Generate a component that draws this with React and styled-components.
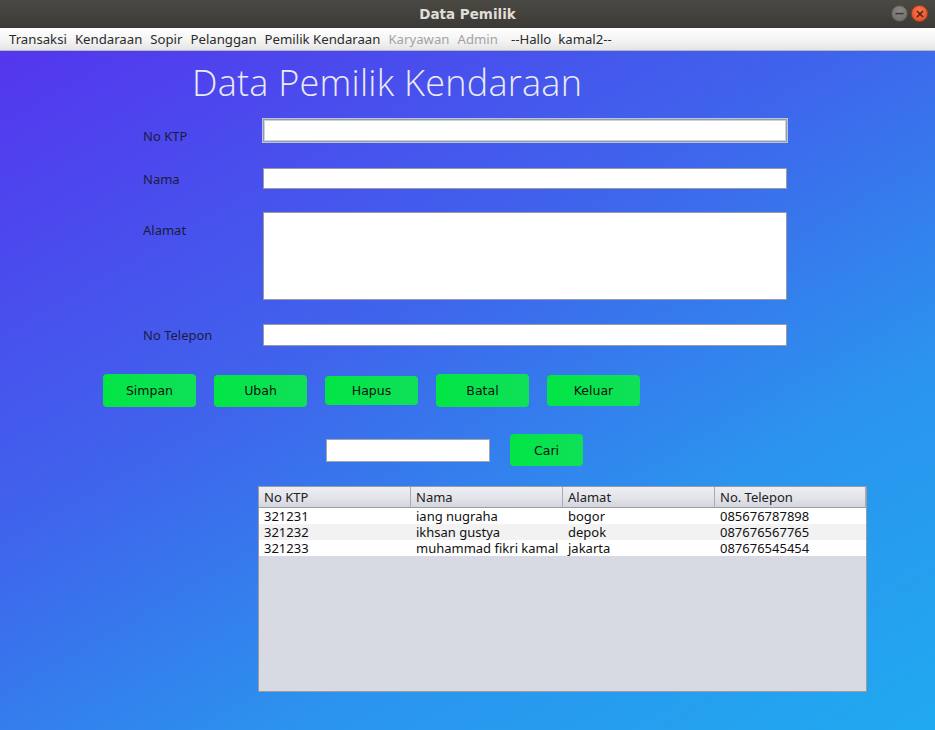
import React from "react";
import styled, { createGlobalStyle } from "styled-components";

const Global = createGlobalStyle`
  html, body { margin: 0; padding: 0; }
  body { width: 935px; height: 730px; overflow: hidden; font-family: "Noto Sans", "DejaVu Sans", sans-serif; }
  * { box-sizing: border-box; }
`;

const Window = styled.div`
  width: 935px;
  height: 730px;
  display: flex;
  flex-direction: column;
`;

const TitleBar = styled.div`
  height: 28px;
  flex: 0 0 28px;
  background: linear-gradient(#4a4944, #3b3a36);
  display: flex;
  align-items: center;
  justify-content: center;
  position: relative;
  color: #e0ddd6;
  font-family: "DejaVu Sans", sans-serif;
  font-weight: bold;
  font-size: 13.5px;
`;

const WinButtons = styled.div`
  position: absolute;
  right: 7px;
  top: 5px;
  display: flex;
  gap: 3px;
`;

const WinBtn = styled.div`
  width: 17px;
  height: 17px;
  border-radius: 50%;
  display: flex;
  align-items: center;
  justify-content: center;
  background: ${(p) =>
    p.$close
      ? "radial-gradient(circle at 50% 35%, #f47a55, #e0491f)"
      : "radial-gradient(circle at 50% 35%, #8a8984, #6a6965)"};
  border: 1px solid ${(p) => (p.$close ? "#b53a18" : "#4e4d49")};
`;

const MenuBar = styled.div`
  height: 23px;
  flex: 0 0 23px;
  background: linear-gradient(#ffffff, #f3f3f3 60%, #e4e4e4);
  border-bottom: 1px solid #b8b8b8;
  display: flex;
  align-items: center;
  padding-left: 9px;
  gap: 8px;
  font-size: 13.2px;
`;

const MenuItem = styled.span`
  color: ${(p) => (p.$disabled ? "#a3a3a3" : "#2b2b2b")};
  margin-left: ${(p) => p.$extra || 0}px;
`;

const Content = styled.div`
  flex: 1;
  background: linear-gradient(150deg, #5436ee 0%, #3f64ec 40%, #2b94ee 70%, #20a9f0 100%);
  display: flex;
  flex-direction: column;
  padding-top: 11px;
`;

const Title = styled.h1`
  margin: 0 0 0 192px;
  font-family: "Open Sans", sans-serif;
  font-weight: 300;
  font-size: 36px;
  letter-spacing: 0.25px;
  line-height: 42px;
  color: #ecebf3;
`;

const Form = styled.div`
  display: flex;
  flex-direction: column;
  margin-left: 143px;
`;

const Row = styled.div`
  display: flex;
  align-items: flex-start;
  height: ${(p) => p.$h}px;
  margin-top: ${(p) => p.$mt}px;
`;

const Label = styled.label`
  width: 120px;
  flex: 0 0 120px;
  font-size: 13px;
  line-height: 18px;
  color: #1d1b3d;
  padding-top: ${(p) => p.$pt || 0}px;
`;

const Field = styled.div`
  width: 524px;
  height: 100%;
  background: #fff;
  border: 1px solid #9a9aa4;
  box-shadow: ${(p) => (p.$focus ? "0 0 0 1px #b8c6da, inset 0 0 0 1px #c9d3e0" : "none")};
`;

const Buttons = styled.div`
  display: flex;
  align-items: center;
  gap: 18px;
  margin: 28px 0 0 103px;
  height: 33px;
`;

const GreenButton = styled.button`
  width: ${(p) => p.$w || 93}px;
  height: ${(p) => p.$h || 33}px;
  background: linear-gradient(90deg, #02e545, #0fe058);
  border: none;
  border-radius: 4px;
  font-family: "DejaVu Sans", sans-serif;
  font-size: 12.5px;
  color: #111;
  padding: 0;
`;

const SearchRow = styled.div`
  display: flex;
  align-items: center;
  gap: 20px;
  margin: 27px 0 0 326px;
  height: 32px;
`;

const SearchInput = styled.div`
  width: 164px;
  height: 23px;
  background: #fff;
  border: 1px solid #a4a4ac;
`;

const TableBox = styled.div`
  margin: 20px 0 0 258px;
  width: 609px;
  height: 206px;
  background: #d7dae2;
  border: 1px solid #9a9ba2;
  display: flex;
  flex-direction: column;
  font-size: 13px;
  color: #111;
`;

const Grid = styled.div`
  display: grid;
  grid-template-columns: 152px 152px 152px 151px;
`;

const HeadCell = styled.div`
  height: 21px;
  background: linear-gradient(#eeeff3, #e2e4ea 55%, #d3d6de);
  border-right: 1px solid #a9abb3;
  border-bottom: 1px solid #9c9ea6;
  padding-left: 5px;
  display: flex;
  align-items: center;
  color: #222;
  &:last-child { border-right: none; }
`;

const Cell = styled.div`
  height: 16px;
  line-height: 16px;
  padding-left: 5px;
  background: ${(p) => (p.$alt ? "#f2f2f2" : "#ffffff")};
  white-space: nowrap;
  overflow: hidden;
`;

const headers = ["No KTP", "Nama", "Alamat", "No. Telepon"];
const rows = [
  ["321231", "iang nugraha", "bogor", "085676787898"],
  ["321232", "ikhsan gustya", "depok", "087676567765"],
  ["321233", "muhammad fikri kamal", "jakarta", "087676545454"],
];

export default function App() {
  return (
    <Window>
      <Global />
      <TitleBar>
        Data Pemilik
        <WinButtons>
          <WinBtn>
            <svg width="9" height="9" viewBox="0 0 9 9">
              <rect x="0.5" y="3.8" width="8" height="1.6" fill="#3a3936" />
            </svg>
          </WinBtn>
          <WinBtn $close>
            <svg width="8" height="8" viewBox="0 0 8 8">
              <path d="M1 1L7 7M7 1L1 7" stroke="#5a1e0c" strokeWidth="1.6" />
            </svg>
          </WinBtn>
        </WinButtons>
      </TitleBar>
      <MenuBar>
        <MenuItem>Transaksi</MenuItem>
        <MenuItem>Kendaraan</MenuItem>
        <MenuItem>Sopir</MenuItem>
        <MenuItem>Pelanggan</MenuItem>
        <MenuItem>Pemilik Kendaraan</MenuItem>
        <MenuItem $disabled>Karyawan</MenuItem>
        <MenuItem $disabled>Admin</MenuItem>
        <MenuItem $extra={5}>--Hallo&nbsp; kamal2--</MenuItem>
      </MenuBar>
      <Content>
        <Title>Data Pemilik Kendaraan</Title>
        <Form>
          <Row $mt={15} $h={23}>
            <Label $pt={8}>No KTP</Label>
            <Field $focus />
          </Row>
          <Row $mt={26} $h={21}>
            <Label $pt={2}>Nama</Label>
            <Field />
          </Row>
          <Row $mt={23} $h={88}>
            <Label $pt={9}>Alamat</Label>
            <Field />
          </Row>
          <Row $mt={24} $h={22}>
            <Label $pt={2}>No Telepon</Label>
            <Field />
          </Row>
        </Form>
        <Buttons>
          <GreenButton>Simpan</GreenButton>
          <GreenButton $h={32}>Ubah</GreenButton>
          <GreenButton $h={29}>Hapus</GreenButton>
          <GreenButton>Batal</GreenButton>
          <GreenButton $h={31}>Keluar</GreenButton>
        </Buttons>
        <SearchRow>
          <SearchInput />
          <GreenButton $w={73} $h={32}>Cari</GreenButton>
        </SearchRow>
        <TableBox>
          <Grid>
            {headers.map((h) => (
              <HeadCell key={h}>{h}</HeadCell>
            ))}
            {rows.map((r, i) =>
              r.map((c, j) => (
                <Cell key={i + "-" + j} $alt={i % 2 === 1}>
                  {c}
                </Cell>
              ))
            )}
          </Grid>
        </TableBox>
      </Content>
    </Window>
  );
}
